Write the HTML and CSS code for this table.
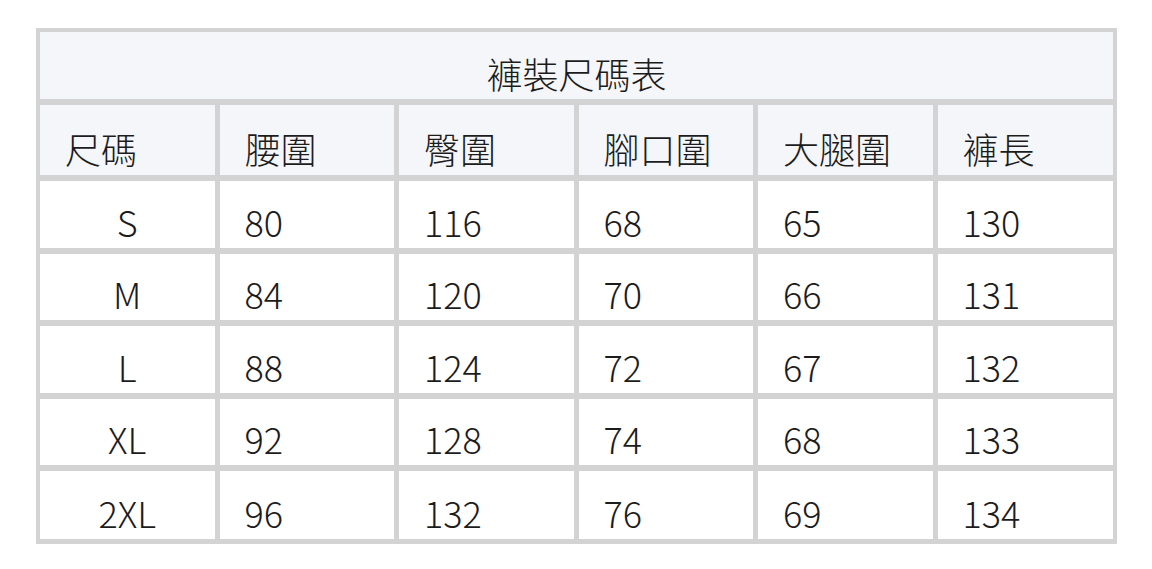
FILE: index.html
```html
<!DOCTYPE html>
<html lang="zh-Hant">
<head>
<meta charset="utf-8">
<title>褲裝尺碼表</title>
<link rel="stylesheet" href="styles.css">
</head>
<body>
<div class="page">
  <table class="size-table">
    <thead>
      <tr class="title-row"><th colspan="6" class="title">褲裝尺碼表</th></tr>
      <tr class="head-row">
        <th>尺碼</th><th>腰圍</th><th>臀圍</th><th>腳口圍</th><th>大腿圍</th><th>褲長</th>
      </tr>
    </thead>
    <tbody>
      <tr><td class="size">S</td><td>80</td><td>116</td><td>68</td><td>65</td><td>130</td></tr>
      <tr><td class="size">M</td><td>84</td><td>120</td><td>70</td><td>66</td><td>131</td></tr>
      <tr><td class="size">L</td><td>88</td><td>124</td><td>72</td><td>67</td><td>132</td></tr>
      <tr><td class="size">XL</td><td>92</td><td>128</td><td>74</td><td>68</td><td>133</td></tr>
      <tr><td class="size">2XL</td><td>96</td><td>132</td><td>76</td><td>69</td><td>134</td></tr>
    </tbody>
  </table>
</div>
</body>
</html>
```

FILE: styles.css
```css
html, body {
  margin: 0;
  padding: 0;
  background: #ffffff;
}

.page {
  padding: 28px 35px 0 36px;
}

.size-table {
  width: 1081px;
  table-layout: fixed;
  border-collapse: separate;
  border-spacing: 0;
  border-top: 4px solid #d3d3d3;
  border-left: 4px solid #d3d3d3;
  font-family: "Noto Sans CJK TC", "Noto Sans", sans-serif;
  font-size: 36px;
  font-weight: 300;
  line-height: 42px;
  color: #1c1c1c;
}

.size-table th,
.size-table td {
  border-right: 5px solid #d3d3d3;
  border-bottom: 6px solid #d3d3d3;
  padding: 0 0 6px 25px;
  text-align: left;
  vertical-align: bottom;
  font-weight: 300;
  box-sizing: border-box;
}

.size-table th:last-child,
.size-table td:last-child {
  border-right-width: 4px;
}

.size-table tbody tr:last-child td {
  border-bottom-width: 5px;
}

.size-table thead th {
  background: #f5f6fa;
}

.title-row th {
  height: 73px;
}

.size-table th.title {
  text-align: center;
  padding-left: 0;
  padding-bottom: 5px;
}

.head-row th {
  height: 76px;
}

.size-table td {
  height: 72.5px;
  background: #ffffff;
}

.size-table td.size {
  text-align: center;
  padding-left: 0;
}
```
